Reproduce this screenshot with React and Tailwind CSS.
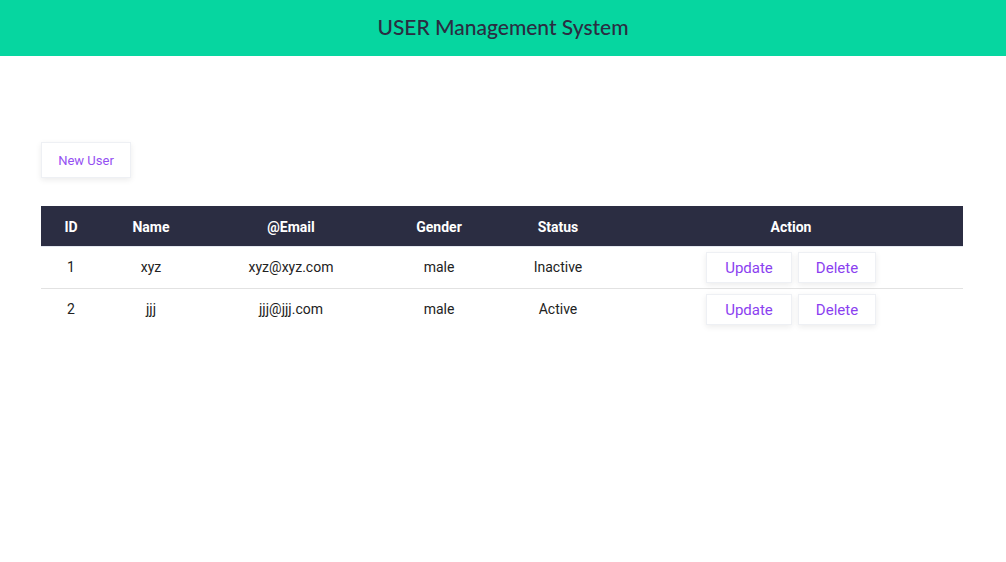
import React from "react";

const users = [
  { id: 1, name: "xyz", email: "xyz@xyz.com", gender: "male", status: "Inactive" },
  { id: 2, name: "jjj", email: "jjj@jjj.com", gender: "male", status: "Active" },
];

function Btn({ children, className = "" }) {
  return (
    <button
      className={
        "bg-white border border-[#eef0f4] shadow-[0_2px_6px_rgba(0,0,0,0.08)] text-[#8b3ff0] leading-none " +
        className
      }
    >
      {children}
    </button>
  );
}

export default function App() {
  return (
    <div className="w-[1006px] h-[562px] bg-white font-['Roboto',sans-serif]">
      <header className="h-[56px] bg-[#06d6a0] flex items-center justify-center pb-[2px]">
        <h1 className="font-['Lato',sans-serif] text-[21px] font-medium text-[#2b2d42]">
          USER Management System
        </h1>
      </header>
      <main className="px-[41px] pt-[86px]">
        <Btn className="w-[90px] h-[36px] text-[13px] text-[#9550f2]">New User</Btn>
        <table className="mt-[28px] w-[922px] border-collapse text-[14px] text-[#222]">
          <thead>
            <tr className="bg-[#2b2d42] text-white h-[40px] border-b border-[#e4e8f0]">
              <th className="w-[60px] font-bold pt-[3px]">ID</th>
              <th className="w-[100px] font-bold pt-[3px]">Name</th>
              <th className="w-[180px] font-bold pt-[3px]">@Email</th>
              <th className="w-[116px] font-bold pt-[3px]">Gender</th>
              <th className="w-[122px] font-bold pt-[3px]">Status</th>
              <th className="w-[344px] font-bold pt-[3px]">Action</th>
            </tr>
          </thead>
          <tbody>
            {users.map((u, i) => (
              <tr
                key={u.id}
                className={i === 0 ? "h-[42px] border-b border-[#e2e2e2]" : "h-[42px]"}
              >
                <td className="text-center">{u.id}</td>
                <td className="text-center">{u.name}</td>
                <td className="text-center">{u.email}</td>
                <td className="text-center">{u.gender}</td>
                <td className="text-center">{u.status}</td>
                <td className="text-center">
                  <div className="flex justify-center gap-[6px] pt-[1px]">
                    <Btn className="w-[86px] h-[31px] text-[15px] pt-[2px]">Update</Btn>
                    <Btn className="w-[78px] h-[31px] text-[15px] pt-[2px]">Delete</Btn>
                  </div>
                </td>
              </tr>
            ))}
          </tbody>
        </table>
      </main>
    </div>
  );
}
